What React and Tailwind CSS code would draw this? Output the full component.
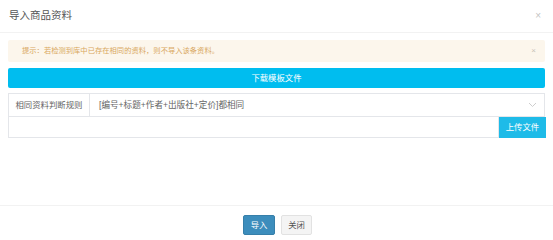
export default function App() {
  const font = { fontFamily: '"Liberation Sans", "Noto Sans CJK SC", sans-serif' };
  return (
    <div className="w-[553px] h-[240px] bg-white flex flex-col text-[#555]" style={font}>
      <div className="h-[33px] shrink-0 border-b border-[#f2f2f2] flex items-center justify-between pl-[9px] pr-[12px]">
        <span className="text-[10.5px] text-[#555]">导入商品资料</span>
        <span className="text-[10px] text-[#c4c4c4] leading-none">×</span>
      </div>
      <div className="px-[8px] pt-[7px] flex flex-col">
        <div className="h-[22px] bg-[#fcf6ec] rounded-[2px] flex items-center justify-between pl-[14px] pr-[9px]">
          <span className="text-[7.3px] text-[#d9a860]">提示：若检测到库中已存在相同的资料，则不导入该条资料。</span>
          <span className="text-[8px] text-[#c9c2b8] leading-none">×</span>
        </div>
        <div className="mt-[6px] h-[20px] bg-[#00bdef] rounded-[2px] flex items-center justify-center text-white text-[8.4px]">
          下载模板文件
        </div>
        <div className="mt-[5px] h-[24px] border border-[#e4e6ea] flex items-center">
          <div className="w-[81px] h-full border-r border-[#e4e6ea] flex items-center justify-center text-[8.4px] text-[#666]">
            相同资料判断规则
          </div>
          <div className="flex-1 flex items-center justify-between pl-[9px] pr-[7px] text-[8.6px] text-[#666]">
            <span>[编号+标题+作者+出版社+定价]都相同</span>
            <svg width="9" height="6" viewBox="0 0 9 6" fill="none" stroke="#c8c8c8" strokeWidth="0.9">
              <path d="M1 1 L4.5 4.5 L8 1" />
            </svg>
          </div>
        </div>
        <div className="h-[21px] flex items-stretch">
          <div className="flex-1 border border-[#e4e6ea] border-t-0"></div>
          <div className="w-[47px] bg-[#1ebbe8] flex items-center justify-center text-white text-[8.4px] -mr-[1px]">
            上传文件
          </div>
        </div>
      </div>
      <div className="flex-1"></div>
      <div className="h-[35px] shrink-0 border-t border-[#f2f2f2] flex items-start justify-center gap-[6px] pt-[9px] pl-[2px]">
        <div className="w-[32px] h-[20px] bg-[#3c8dbc] border border-[#367fa9] rounded-[2px] flex items-center justify-center text-white text-[8.4px]">
          导入
        </div>
        <div className="w-[31px] h-[20px] bg-[#f4f4f4] border border-[#e2e2e2] rounded-[2px] flex items-center justify-center text-[#555] text-[8.4px]">
          关闭
        </div>
      </div>
    </div>
  );
}
